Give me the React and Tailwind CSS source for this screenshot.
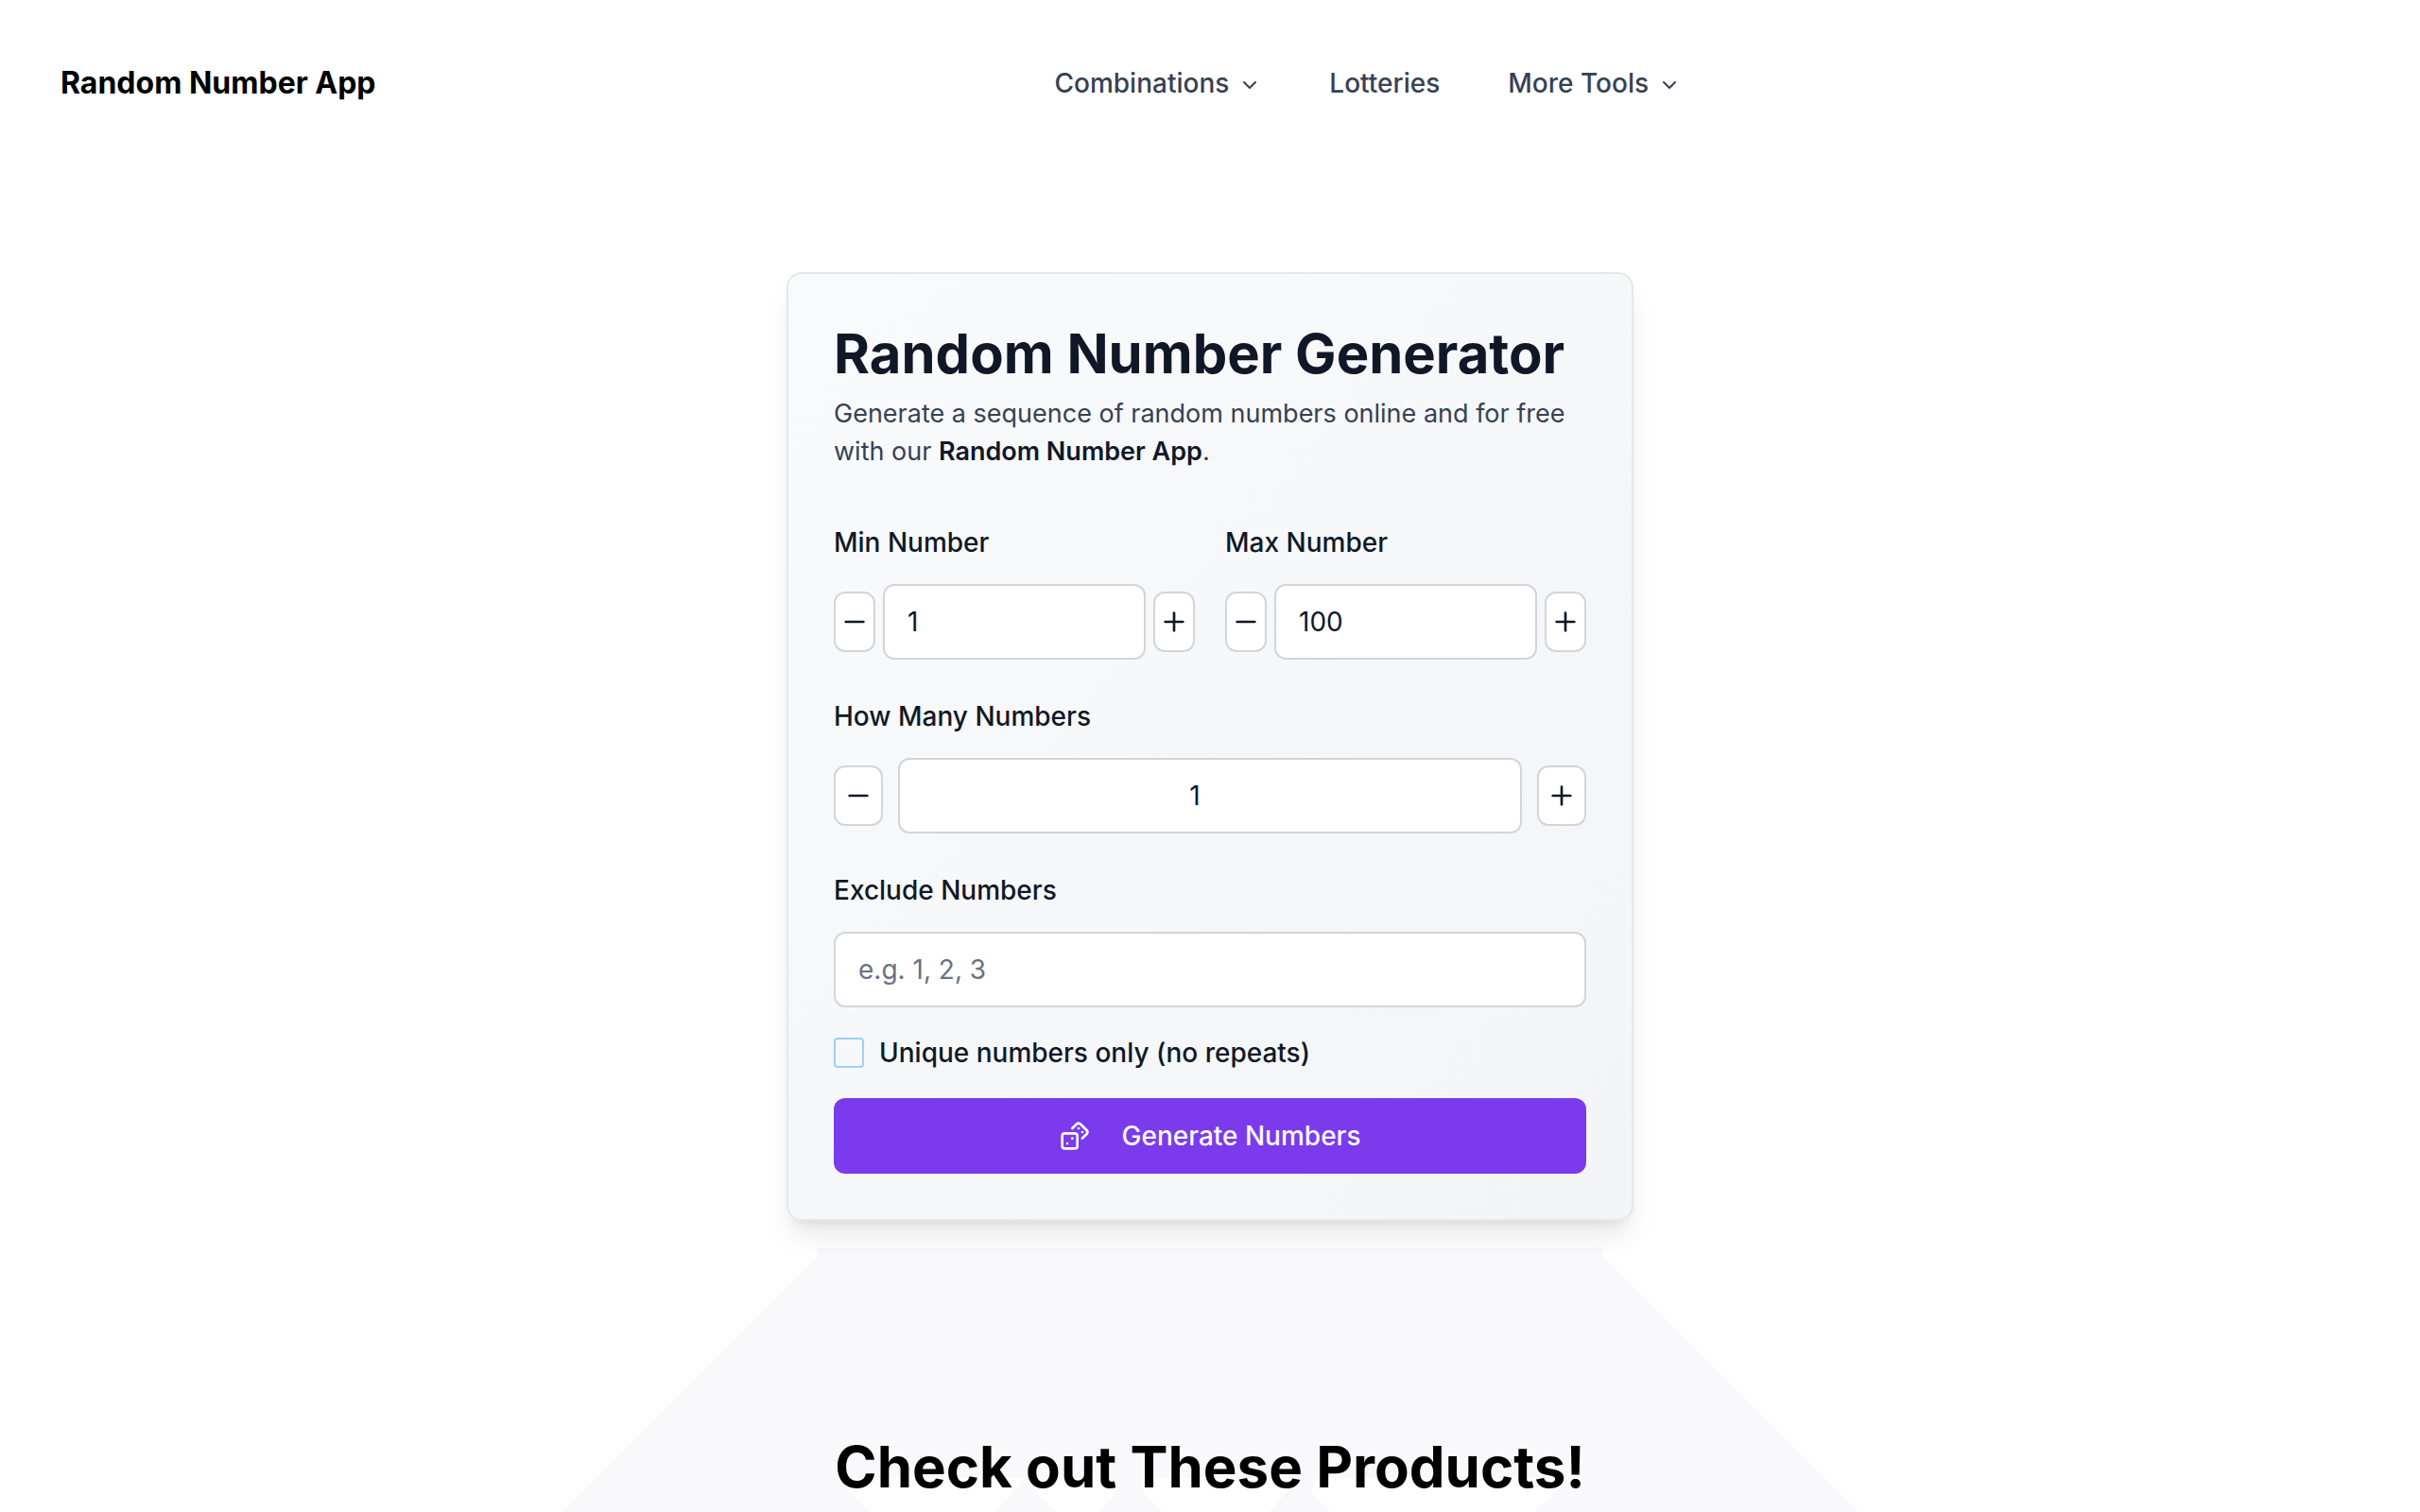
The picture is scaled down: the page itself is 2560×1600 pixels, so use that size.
import React, { useState } from "react";
import { ChevronDown, Dices, Minus, Plus } from "lucide-react";

const navItems = [
  { label: "Combinations", menu: true },
  { label: "Lotteries", menu: false },
  { label: "More Tools", menu: true },
];

const inputClass =
  "h-20 rounded-xl border-2 border-gray-300 bg-white pl-6 text-[28px] leading-10 text-gray-900 placeholder-gray-500 [appearance:textfield] [&::-webkit-inner-spin-button]:appearance-none";

function StepButton({ label, wide, onClick, children }) {
  return (
    <button
      type="button"
      aria-label={label}
      onClick={onClick}
      className={`flex h-16 shrink-0 items-center justify-center rounded-xl border-2 border-gray-300 bg-white text-gray-900 ${
        wide ? "w-[52px]" : "w-11"
      }`}
    >
      {children}
    </button>
  );
}

function NumberField({ id, label, value, onChange, wide }) {
  return (
    <div className="flex min-w-0 flex-col gap-6">
      <label htmlFor={id} className="text-[28px] leading-10 font-medium text-gray-900">
        {label}
      </label>
      <div className={`flex items-center ${wide ? "gap-4" : "gap-2"}`}>
        <StepButton label={`Decrease ${label}`} wide={wide} onClick={() => onChange(value - 1)}>
          <Minus size={32} />
        </StepButton>
        <input
          id={id}
          type="number"
          value={value}
          onChange={(e) => onChange(Number(e.target.value))}
          className={`${inputClass} min-w-0 flex-1 ${wide ? "pr-14 text-center" : "pr-6"}`}
        />
        <StepButton label={`Increase ${label}`} wide={wide} onClick={() => onChange(value + 1)}>
          <Plus size={32} />
        </StepButton>
      </div>
    </div>
  );
}

function Header() {
  return (
    <header className="flex h-44 items-center justify-between px-16">
      <a href="#" className="text-[32px] leading-10 font-bold text-black">
        Random Number App
      </a>
      <nav className="flex items-center gap-[72px] text-[28px] leading-10 font-medium text-gray-700">
        {navItems.map((item) =>
          item.menu ? (
            <button key={item.label} type="button" className="flex items-center gap-2.5">
              {item.label}
              <ChevronDown size={24} className="mt-1" />
            </button>
          ) : (
            <a key={item.label} href="#">
              {item.label}
            </a>
          )
        )}
      </nav>
      <div />
    </header>
  );
}

function Generator() {
  const [min, setMin] = useState(1);
  const [max, setMax] = useState(100);
  const [count, setCount] = useState(1);
  const [exclude, setExclude] = useState("");
  const [unique, setUnique] = useState(false);

  return (
    <section className="relative z-10 mx-auto mt-28 w-full max-w-4xl rounded-2xl border-2 border-gray-200 bg-linear-to-br from-gray-50 to-gray-100 p-12 shadow-[0_20px_30px_-6px_rgba(0,0,0,0.1),0_8px_12px_-8px_rgba(0,0,0,0.1)]">
      <h1 className="text-[58px] leading-[72px] font-bold text-gray-900">Random Number Generator</h1>
      <p className="mt-2 text-[27px] leading-10 text-gray-700">
        Generate a sequence of random numbers online and for free with our{" "}
        <strong className="font-semibold text-gray-900">Random Number App</strong>.
      </p>

      <form className="mt-14 flex flex-col gap-8" onSubmit={(e) => e.preventDefault()}>
        <div className="flex flex-col gap-10">
          <div className="grid grid-cols-2 gap-8">
            <NumberField id="min" label="Min Number" value={min} onChange={setMin} />
            <NumberField id="max" label="Max Number" value={max} onChange={setMax} />
          </div>

          <NumberField id="count" label="How Many Numbers" value={count} onChange={setCount} wide />

          <div className="flex flex-col gap-6">
            <label htmlFor="exclude" className="text-[28px] leading-10 font-medium text-gray-900">
              Exclude Numbers
            </label>
            <input
              id="exclude"
              type="text"
              placeholder="e.g. 1, 2, 3"
              value={exclude}
              onChange={(e) => setExclude(e.target.value)}
              className={`${inputClass} w-full pr-6`}
            />
          </div>
        </div>

        <div className="flex h-8 items-center gap-4">
          <input
            id="unique"
            type="checkbox"
            checked={unique}
            onChange={(e) => setUnique(e.target.checked)}
            className="size-8 shrink-0 appearance-none rounded-sm border-2 border-[#9ad3f5] checked:bg-violet-600"
          />
          <label htmlFor="unique" className="text-[28px] leading-8 font-medium text-gray-900">
            Unique numbers only (no repeats)
          </label>
        </div>

        <button
          type="submit"
          className="flex h-20 w-full items-center justify-center gap-[34px] rounded-xl bg-[#7c3aed] text-[28px] leading-10 font-medium text-gray-50"
        >
          <Dices size={32} />
          Generate Numbers
        </button>
      </form>
    </section>
  );
}

function Products() {
  return (
    <section className="relative overflow-hidden pt-56 pb-3">
      {/* backdrop that fans out below the card */}
      <svg
        className="absolute top-0 left-1/2 -translate-x-1/2"
        width="1372"
        height="308"
        viewBox="0 0 1372 308"
        aria-hidden="true"
      >
        <path d="M270 28H1102V38L1372 308H0L270 38Z" fill="#f9f9fb" />
        <path
          d="M294 272H491L479 285L458 308H326L305 285ZM508 272H581L589 285L569 308H523L499 285ZM622 272H761L769 285L748 308H636L614 285ZM800 272H1046L1054 285L1029 308H813L792 285Z"
          fill="#fff"
        />
      </svg>
      <h2 className="relative text-center text-[60px] leading-[72px] font-bold text-black">
        Check out These Products!
      </h2>
    </section>
  );
}

function App() {
  return (
    <div className="bg-white font-[Inter,sans-serif]">
      <Header />
      <main>
        <Generator />
        <Products />
      </main>
    </div>
  );
}

export default App;
